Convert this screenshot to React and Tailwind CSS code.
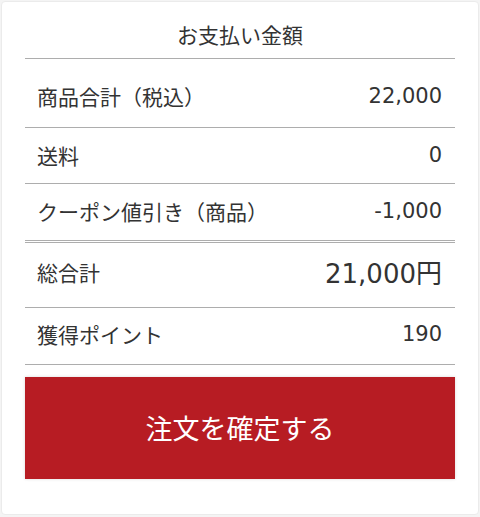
const rows = [
  { label: '商品合計（税込）', value: '22,000', h: 'h-[69px] pt-[8px]' },
  { label: '送料', value: '0', h: 'h-[56px]' },
  { label: 'クーポン値引き（商品）', value: '-1,000', h: 'h-[57px]' },
]

const num = "font-['DejaVu_Sans',sans-serif]"

export default function App() {
  return (
    <div className="min-h-[517px] bg-[#f4f4f4] p-[1px] font-['Noto_Sans_CJK_JP',sans-serif] text-[#333]">
      <div className="h-[514px] rounded-[4px] border border-[#ebebeb] bg-white px-[23px]">
        <h2 className="flex h-[56px] items-center justify-center pt-[10px] text-[21px] font-normal">
          お支払い金額
        </h2>

        <div className="border-t border-[#adadad]">
          {rows.map((r) => (
            <div
              key={r.label}
              className={`flex items-center justify-between border-b border-[#adadad] pl-[12px] pr-[13px] text-[21px] ${r.h}`}
            >
              <span>{r.label}</span>
              <span className={num}>{r.value}</span>
            </div>
          ))}
        </div>

        {/* double rule before the total */}
        <div className="mt-[1px] border-t border-[#adadad]" />

        <div className="flex h-[65px] items-center justify-between border-b border-[#adadad] pl-[12px] pr-[13px] pb-[4px]">
          <span className="text-[21px]">総合計</span>
          <span className="text-[26px]">
            <span className={num}>21,000</span>円
          </span>
        </div>
        <div className="flex h-[57px] items-center justify-between border-b border-[#adadad] pl-[12px] pr-[13px] pb-[2px] text-[21px]">
          <span>獲得ポイント</span>
          <span className={num}>190</span>
        </div>

        <button className="mt-[12px] flex h-[102px] w-full items-center justify-center bg-[#b71c23] text-[27px] text-white shadow-[0_0_3px_rgba(0,0,0,0.15)]">
          注文を確定する
        </button>
      </div>
    </div>
  )
}
